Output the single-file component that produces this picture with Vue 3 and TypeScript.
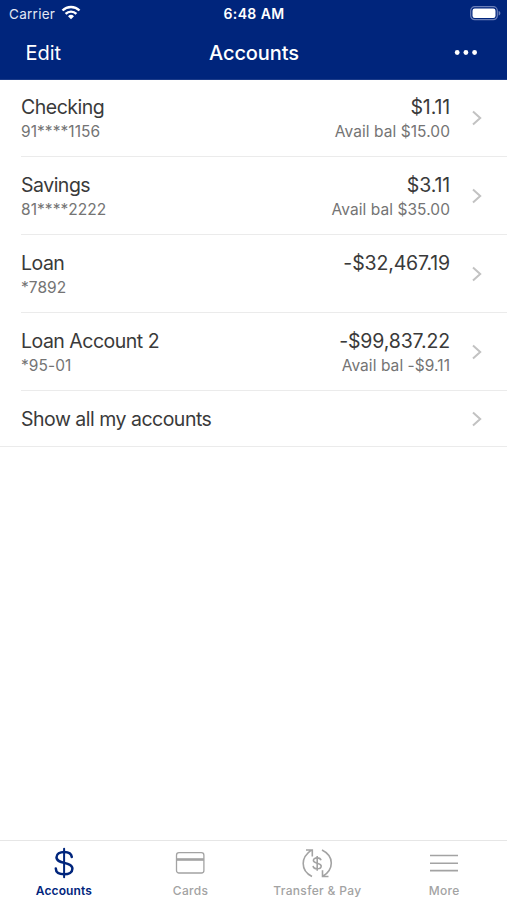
<script setup lang="ts">
interface Account {
  name: string
  mask: string
  balance: string
  available?: string
}

const accounts: Account[] = [
  { name: 'Checking', mask: '91****1156', balance: '$1.11', available: 'Avail bal $15.00' },
  { name: 'Savings', mask: '81****2222', balance: '$3.11', available: 'Avail bal $35.00' },
  { name: 'Loan', mask: '*7892', balance: '-$32,467.19' },
  { name: 'Loan Account 2', mask: '*95-01', balance: '-$99,837.22', available: 'Avail bal -$9.11' },
]
</script>

<template>
  <div class="screen">
    <header class="header">
      <div class="status">
        <div class="carrier">
          <span>Carrier</span>
          <svg class="wifi" width="20" height="15" viewBox="0 0 20 15" fill="none" stroke="#fff" stroke-width="2.4">
            <path d="M1.5 5.5a12.2 12.2 0 0 1 17 0" />
            <path d="M4.6 8.8a7.7 7.7 0 0 1 10.8 0" />
            <path d="M10 14.3l-3-3.1a4.3 4.3 0 0 1 6 0z" fill="#fff" stroke="none" />
          </svg>
        </div>
        <div class="time">6:48 AM</div>
        <svg class="battery" width="31" height="15" viewBox="0 0 31 15">
          <rect x="0.7" y="0.7" width="26.6" height="13" rx="4" fill="none" stroke="#6b7fb8" stroke-width="1.2" />
          <rect x="2.5" y="2.5" width="23" height="9.4" rx="2.2" fill="#fff" />
          <path d="M28.6 5v4.6c1-.3 1.8-1.2 1.8-2.3s-.8-2-1.8-2.3z" fill="#6b7fb8" />
        </svg>
      </div>
      <nav class="navbar">
        <span class="edit">Edit</span>
        <h1 class="title">Accounts</h1>
        <svg class="dots" width="24" height="6" viewBox="0 0 24 6" fill="#fff">
          <circle cx="3.2" cy="2.5" r="2.4" />
          <circle cx="11.9" cy="2.5" r="2.4" />
          <circle cx="20.6" cy="2.5" r="2.4" />
        </svg>
      </nav>
    </header>

    <main class="list">
      <div v-for="account in accounts" :key="account.name" class="row">
        <div class="info">
          <div class="line">
            <span>{{ account.name }}</span>
            <span class="money">{{ account.balance }}</span>
          </div>
          <div class="sub">
            <span class="mask">{{ account.mask }}</span>
            <span class="avail">{{ account.available }}</span>
          </div>
        </div>
        <svg class="chevron" width="12" height="16" viewBox="0 0 12 16">
          <path d="M2 1.5l7.2 6.5L2 14.5" />
        </svg>
      </div>
      <div class="row all">
        <div class="info line">Show all my accounts</div>
        <svg class="chevron" width="12" height="16" viewBox="0 0 12 16">
          <path d="M2 1.5l7.2 6.5L2 14.5" />
        </svg>
      </div>
    </main>

    <footer class="tabs">
      <div class="tab active">
        <svg width="32" height="32" viewBox="0 0 32 32" fill="none" stroke="currentColor" stroke-width="2.5" stroke-linecap="round">
          <path d="M17.1 1.8v28.4" stroke-width="2" />
          <path d="M24.8 10C24.4 6.5 21.3 4.900 17.200 4.900c-4.300 0-7.700 1.900-7.700 5.400 0 7.400 15.900 3.700 15.900 11.500 0 3.600-3.600 5.500-8.100 5.500-4.900 0-8.400-1.900-8.500-5.800" />
        </svg>
        <span class="label">Accounts</span>
      </div>
      <div class="tab">
        <svg width="32" height="32" viewBox="0 0 32 32" fill="none" stroke="currentColor" stroke-width="1.3">
          <rect x="2.5" y="5.7" width="27.4" height="20.3" rx="2.5" />
          <path d="M2.5 12.5h27.4" stroke-width="2.6" />
        </svg>
        <span class="label">Cards</span>
      </div>
      <div class="tab">
        <svg width="32" height="32" viewBox="0 0 32 32" fill="none" stroke="currentColor" stroke-width="1.6">
          <path d="M11 29.5C5 26.5 2.2 22 2.2 16.5c0-5.500 3.300-10.200 8.500-13.700M5 3h6.300v6.500" />
          <path d="M21 3c6 3 9.300 7.500 9.300 13 0 5.500-3.300 10.200-8.700 13.500M27.500 29.500h-6v-6.300" />
          <path d="M16.200 9v14.700" />
          <path d="M20 13.300c-.4-1.700-1.700-2.400-3.800-2.400-2.300 0-3.800 1-3.800 2.600 0 3.500 7.800 1.900 7.800 5.500 0 1.800-1.700 2.800-3.900 2.800-2.500 0-4.100-1-4.200-2.900" />
        </svg>
        <span class="label">Transfer &amp; Pay</span>
      </div>
      <div class="tab">
        <svg width="32" height="32" viewBox="0 0 32 32" fill="none" stroke="currentColor" stroke-width="1.6">
          <path d="M2 8.5h28M2 16.2h28M2 23.6h28" />
        </svg>
        <span class="label">More</span>
      </div>
    </footer>
  </div>
</template>

<style>
body {
  background: #fff;
}
</style>

<style scoped>
.screen {
  display: flex;
  flex-direction: column;
  height: 900px;
  overflow: hidden;
  background: #fff;
  font-family: Inter, "Liberation Sans", sans-serif;
  color: #3a3a3a;
}
.header {
  box-sizing: border-box;
  height: 80px;
  background: #00257c;
  color: #fff;
  border-bottom: 1px solid #1b3b89;
}
.status,
.navbar {
  display: grid;
  grid-template-columns: 1fr auto 1fr;
  align-items: center;
}
.status {
  height: 27px;
  padding: 0 6px 0 7px;
  font-size: 13.5px;
}
.carrier {
  display: flex;
  align-items: center;
  gap: 6px;
  padding-left: 2px;
  letter-spacing: 0.28px;
  color: #e3e8f3;
}
.wifi {
  margin-top: -2px;
}
.time {
  font-size: 14px;
  font-weight: 600;
  letter-spacing: 0.4px;
}
.battery {
  justify-self: end;
}
.navbar {
  height: 51px;
  padding: 0 28px 0 25px;
  font-size: 20px;
}
.edit {
  padding-left: 0.5px;
}
.title {
  margin: 0;
  padding-left: 4px;
  font-size: 20px;
  font-weight: 500;
  letter-spacing: -0.1px;
}
.dots {
  justify-self: end;
  margin-right: 1px;
}
.list {
  margin-top: -1px;
}
.row {
  box-sizing: border-box;
  height: 78px;
  margin-left: 21px;
  padding-right: 24px;
  display: flex;
  align-items: center;
  gap: 21px;
  border-bottom: 1px solid #ebebeb;
}
.all {
  height: 56px;
  margin-left: 0;
  padding-left: 21px;
}
.info {
  flex: 1;
}
.line,
.sub {
  display: flex;
  justify-content: space-between;
}
.line {
  font-size: 19.5px;
  line-height: 26px;
  letter-spacing: -0.5px;
}
.money {
  letter-spacing: -0.15px;
}
.sub {
  font-size: 15.5px;
  line-height: 22px;
  letter-spacing: 0.06px;
  color: #747474;
}
.row:not(.all) .info {
  padding-top: 2px;
}
.row:not(.all) .line {
  padding-bottom: 1px;
  margin-top: -1px;
}
.chevron {
  fill: none;
  stroke: #c2c2c2;
  stroke-width: 2;
}
.tabs {
  box-sizing: border-box;
  height: 60px;
  margin-top: auto;
  padding-top: 6px;
  display: grid;
  grid-template-columns: repeat(4, 1fr);
  border-top: 1px solid #e6e6e6;
}
.tab {
  display: flex;
  flex-direction: column;
  align-items: center;
  color: #a3a3a3;
}
.active {
  color: #00257c;
}
.label {
  padding-top: 1px;
  padding-left: 1px;
  font-size: 12px;
  line-height: 22px;
  font-weight: 500;
  letter-spacing: 0.33px;
}
.active .label {
  font-weight: 600;
  letter-spacing: 0.1px;
}
</style>
